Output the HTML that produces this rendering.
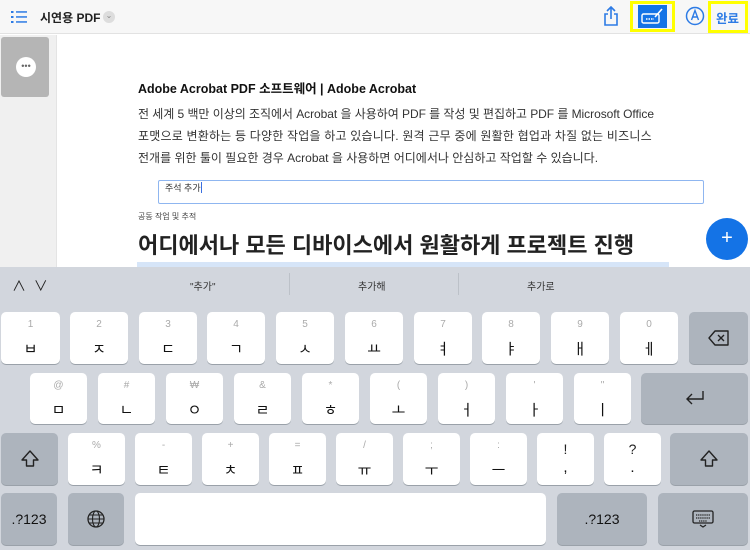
<!DOCTYPE html>
<html><head><meta charset="utf-8"><style>
*{margin:0;padding:0;box-sizing:border-box}
body{width:750px;height:550px;overflow:hidden;position:relative;background:#fff;font-family:"Liberation Sans","Noto Sans CJK KR",sans-serif;color:#222}
.a{position:absolute;white-space:nowrap}
.k{position:absolute;background:#fff;border-radius:5px;box-shadow:0 1px 0 #9aa1a9;text-align:center;color:#111}
.g{background:#adb4bd}
.k .s{position:absolute;left:0;right:0;top:7px;font-size:10px;color:#aaa}
.k .m{position:absolute;left:0;right:0;top:26px;font-size:15px}
</style></head><body>
<div class="a" style="left:0;top:0;width:750px;height:34px;background:#f7f7f7;border-bottom:1px solid #e2e2e2"></div>
<svg class="a" style="left:11px;top:10px" width="18" height="14"><g fill="#2d7be5"><rect x="0" y="1" width="2.5" height="2"/><rect x="0" y="6" width="2.5" height="2"/><rect x="0" y="11" width="2.5" height="2"/><rect x="5" y="1.2" width="11" height="1.5"/><rect x="5" y="6.2" width="11" height="1.5"/><rect x="5" y="11.2" width="11" height="1.5"/></g></svg>
<div class="a" style="left:40px;top:9px;font-size:12px;font-weight:bold;color:#222">시연용 PDF</div>
<div class="a" style="left:103px;top:11px;width:12px;height:12px;border-radius:6px;background:#ddd;font-size:8px;color:#888;text-align:center;line-height:10px">⌄</div>
<svg class="a" style="left:603px;top:6px" width="16" height="20"><path d="M8 1v12M4 5l4-4 4 4M5 8H2v11h12V8h-3" stroke="#2d7be5" stroke-width="1.6" fill="none"/></svg>
<div class="a" style="left:630px;top:1px;width:45px;height:31px;border:3px solid #ffff00"></div>
<div class="a" style="left:638px;top:5px;width:29px;height:23px;background:#1473e6"></div>
<svg class="a" style="left:641px;top:8px" width="24" height="18"><rect x="1" y="6" width="17" height="9" rx="1.5" stroke="#fff" stroke-width="1.4" fill="none"/><path d="M5 11h8" stroke="#fff" stroke-width="1.4" stroke-dasharray="1.5 1"/><path d="M14 9l7-8" stroke="#fff" stroke-width="1.6"/></svg>
<svg class="a" style="left:685px;top:6px" width="20" height="20"><circle cx="10" cy="10" r="8.5" stroke="#2d7be5" stroke-width="1.5" fill="none"/><path d="M6.5 14L10 4.5 13.5 14M8 11h4" stroke="#2d7be5" stroke-width="1.4" fill="none"/></svg>
<div class="a" style="left:708px;top:1px;width:40px;height:32px;border:3px solid #ffff00"></div>
<div class="a" style="left:716px;top:8px;font-size:12.5px;font-weight:bold;color:#2d7be5">완료</div>
<div class="a" style="left:0;top:35px;width:57px;height:235px;background:#f0f0f0;border-right:1px solid #e4e4e4"></div>
<div class="a" style="left:1px;top:37px;width:48px;height:60px;background:#b5b5b5;border-radius:3px"></div>
<div class="a" style="left:16px;top:57px;width:20px;height:20px;border-radius:10px;background:#fff;font-size:9px;line-height:18px;text-align:center;color:#666">•••</div>
<div class="a" style="left:138px;top:78px;font-size:12.5px;font-weight:bold;color:#111">Adobe Acrobat PDF 소프트웨어 | Adobe Acrobat</div>
<div class="a" style="left:138px;top:105px;font-size:12px;color:#333;letter-spacing:-0.05px">전 세계 5 백만 이상의 조직에서 Acrobat 을 사용하여 PDF 를 작성 및 편집하고 PDF 를 Microsoft Office</div>
<div class="a" style="left:138px;top:127px;font-size:12px;color:#333;letter-spacing:0.2px">포맷으로 변환하는 등 다양한 작업을 하고 있습니다. 원격 근무 중에 원활한 협업과 차질 없는 비즈니스</div>
<div class="a" style="left:138px;top:149px;font-size:12px;color:#333;letter-spacing:0px">전개를 위한 툴이 필요한 경우 Acrobat 을 사용하면 어디에서나 안심하고 작업할 수 있습니다.</div>
<div class="a" style="left:158px;top:180px;width:546px;height:24px;border:1.5px solid #8fb6f0;border-radius:2px"></div>
<div class="a" style="left:165px;top:181px;font-size:9px;color:#333">주석 추가<span style="display:inline-block;width:1.5px;height:11px;background:#3a6fe0;vertical-align:-2px"></span></div>
<div class="a" style="left:138px;top:211px;font-size:8px;color:#444">공동 작업 및 추적</div>
<div class="a" style="left:138px;top:228px;font-size:22px;font-weight:bold;color:#222">어디에서나 모든 디바이스에서 원활하게 프로젝트 진행</div>
<div class="a" style="left:137px;top:262px;width:532px;height:6px;background:#d6e5f8"></div>
<div class="a" style="left:706px;top:218px;width:42px;height:42px;border-radius:21px;background:#1473e6;color:#fff;font-size:20px;line-height:40px;text-align:center">+</div>
<div class="a" style="left:0;top:267px;width:750px;height:283px;background:#d2d6dd"></div>
<div class="a" style="left:12px;top:276px;font-size:14px;color:#222">∧ &nbsp;∨</div>
<div class="a" style="left:289px;top:273px;width:1px;height:22px;background:#bcc1c8"></div>
<div class="a" style="left:458px;top:273px;width:1px;height:22px;background:#bcc1c8"></div>
<div class="a" style="left:190px;top:278px;font-size:10px;color:#333">"추가"</div>
<div class="a" style="left:358px;top:278px;font-size:10px;color:#333">추가해</div>
<div class="a" style="left:527px;top:278px;font-size:10px;color:#333">추가로</div>

<div class="k" style="left:1px;top:312px;width:59px;height:52px"><div class="s">1</div><div class="m">ㅂ</div></div>
<div class="k" style="left:70px;top:312px;width:58px;height:52px"><div class="s">2</div><div class="m">ㅈ</div></div>
<div class="k" style="left:139px;top:312px;width:58px;height:52px"><div class="s">3</div><div class="m">ㄷ</div></div>
<div class="k" style="left:207px;top:312px;width:58px;height:52px"><div class="s">4</div><div class="m">ㄱ</div></div>
<div class="k" style="left:276px;top:312px;width:58px;height:52px"><div class="s">5</div><div class="m">ㅅ</div></div>
<div class="k" style="left:345px;top:312px;width:58px;height:52px"><div class="s">6</div><div class="m">ㅛ</div></div>
<div class="k" style="left:414px;top:312px;width:58px;height:52px"><div class="s">7</div><div class="m">ㅕ</div></div>
<div class="k" style="left:482px;top:312px;width:58px;height:52px"><div class="s">8</div><div class="m">ㅑ</div></div>
<div class="k" style="left:551px;top:312px;width:58px;height:52px"><div class="s">9</div><div class="m">ㅐ</div></div>
<div class="k" style="left:620px;top:312px;width:58px;height:52px"><div class="s">0</div><div class="m">ㅔ</div></div>
<div class="k g" style="left:689px;top:312px;width:59px;height:52px"><svg style="margin-top:18px" width="22" height="16"><path d="M7 1h13v14H7L1 8z" stroke="#222" stroke-width="1.4" fill="none" stroke-linejoin="round"/><path d="M10 5l6 6M16 5l-6 6" stroke="#222" stroke-width="1.4"/></svg></div>

<div class="k" style="left:30px;top:373px;width:57px;height:51px"><div class="s">@</div><div class="m">ㅁ</div></div>
<div class="k" style="left:98px;top:373px;width:57px;height:51px"><div class="s">#</div><div class="m">ㄴ</div></div>
<div class="k" style="left:166px;top:373px;width:57px;height:51px"><div class="s">₩</div><div class="m">ㅇ</div></div>
<div class="k" style="left:234px;top:373px;width:57px;height:51px"><div class="s">&amp;</div><div class="m">ㄹ</div></div>
<div class="k" style="left:302px;top:373px;width:57px;height:51px"><div class="s">*</div><div class="m">ㅎ</div></div>
<div class="k" style="left:370px;top:373px;width:57px;height:51px"><div class="s">(</div><div class="m">ㅗ</div></div>
<div class="k" style="left:438px;top:373px;width:57px;height:51px"><div class="s">)</div><div class="m">ㅓ</div></div>
<div class="k" style="left:506px;top:373px;width:57px;height:51px"><div class="s">'</div><div class="m">ㅏ</div></div>
<div class="k" style="left:574px;top:373px;width:57px;height:51px"><div class="s">"</div><div class="m">ㅣ</div></div>
<div class="k g" style="left:641px;top:373px;width:107px;height:51px"><svg style="margin-top:16px" width="22" height="18"><path d="M19 2v8H3M8 5l-5 5 5 5" stroke="#222" stroke-width="1.4" fill="none"/></svg></div>

<div class="k g" style="left:1px;top:433px;width:57px;height:52px"><svg style="margin-top:16px" width="20" height="20"><path d="M10 2L2 11h4.5v6h7v-6H18z" stroke="#222" stroke-width="1.4" fill="none" stroke-linejoin="round"/></svg></div>
<div class="k" style="left:68px;top:433px;width:57px;height:52px"><div class="s">%</div><div class="m">ㅋ</div></div>
<div class="k" style="left:135px;top:433px;width:57px;height:52px"><div class="s">-</div><div class="m">ㅌ</div></div>
<div class="k" style="left:202px;top:433px;width:57px;height:52px"><div class="s">+</div><div class="m">ㅊ</div></div>
<div class="k" style="left:269px;top:433px;width:57px;height:52px"><div class="s">=</div><div class="m">ㅍ</div></div>
<div class="k" style="left:336px;top:433px;width:57px;height:52px"><div class="s">/</div><div class="m">ㅠ</div></div>
<div class="k" style="left:403px;top:433px;width:57px;height:52px"><div class="s">;</div><div class="m">ㅜ</div></div>
<div class="k" style="left:470px;top:433px;width:57px;height:52px"><div class="s">:</div><div class="m">ㅡ</div></div>
<div class="k" style="left:537px;top:433px;width:57px;height:52px"><div class="s" style="color:#222;font-size:14px;top:8px">!</div><div class="m">,</div></div>
<div class="k" style="left:604px;top:433px;width:57px;height:52px"><div class="s" style="color:#222;font-size:14px;top:8px">?</div><div class="m">.</div></div>
<div class="k g" style="left:670px;top:433px;width:78px;height:52px"><svg style="margin-top:16px" width="20" height="20"><path d="M10 2L2 11h4.5v6h7v-6H18z" stroke="#222" stroke-width="1.4" fill="none" stroke-linejoin="round"/></svg></div>

<div class="k g" style="left:1px;top:493px;width:56px;height:52px;font-size:14px;line-height:52px">.?123</div>
<div class="k g" style="left:68px;top:493px;width:56px;height:52px"><svg style="margin-top:16px" width="20" height="20"><circle cx="10" cy="10" r="8" stroke="#222" stroke-width="1.3" fill="none"/><ellipse cx="10" cy="10" rx="3.5" ry="8" stroke="#222" stroke-width="1.1" fill="none"/><path d="M2 10h16M3.5 6h13M3.5 14h13" stroke="#222" stroke-width="1.1"/></svg></div>
<div class="k" style="left:135px;top:493px;width:411px;height:52px"></div>
<div class="k g" style="left:557px;top:493px;width:90px;height:52px;font-size:14px;line-height:52px">.?123</div>
<div class="k g" style="left:658px;top:493px;width:90px;height:52px"><svg style="margin-top:16px" width="24" height="20"><rect x="2" y="2" width="20" height="12" rx="1.5" stroke="#222" stroke-width="1.3" fill="none"/><path d="M5 6h14M5 9h14M8 12h8" stroke="#222" stroke-width="1.2" stroke-dasharray="1.3 0.8"/><path d="M9 16l3 2 3-2" stroke="#222" stroke-width="1.2" fill="none"/></svg></div>
</body></html>
